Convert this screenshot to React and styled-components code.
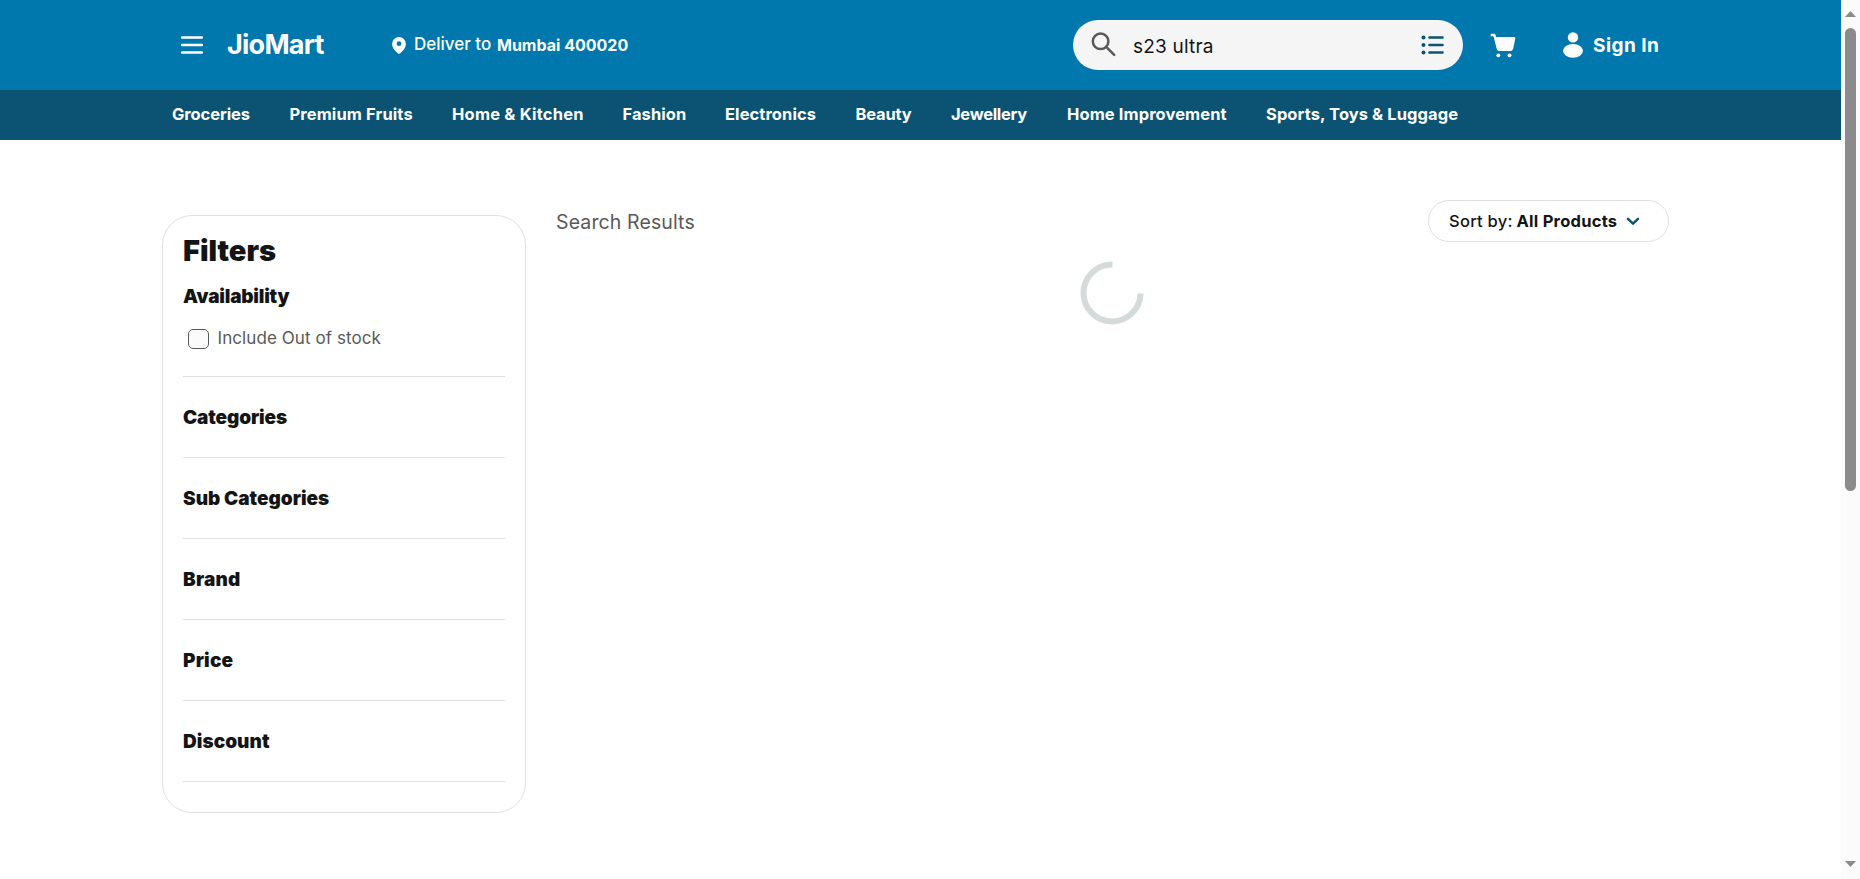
import React from "react";
import styled, { createGlobalStyle } from "styled-components";

const GlobalStyle = createGlobalStyle`
  *, *::before, *::after { box-sizing: border-box; }
  html, body { margin: 0; padding: 0; background: #fff; overflow: hidden; }
  body { font-family: Inter, "Liberation Sans", sans-serif; color: #141414; }
  svg { display: block; flex: none; }
`;

const Window = styled.div`
  display: flex;
  width: 100%;
  height: 879px;
`;

const Page = styled.div`
  flex: 1;
  min-width: 0;
`;

const TopBar = styled.header`
  display: flex;
  align-items: center;
  height: 90px;
  padding-left: 181px;
  background: #0078ad;
  color: #fff;
`;

const Logo = styled.div`
  width: 165px;
  margin-left: 24px;
  font-size: 27px;
  font-weight: 700;
  letter-spacing: -0.75px;
  line-height: 32px;
  padding-bottom: 1px;
`;

const Delivery = styled.div`
  display: flex;
  align-items: center;
  width: 681px;
  line-height: 20px;
  font-size: 16px;
  white-space: nowrap;
`;

const DeliverLabel = styled.span`
  width: 83px;
  margin-left: 8px;
  padding-bottom: 2px;
  font-size: 17px;
  font-weight: 500;
  letter-spacing: 0;
`;

const DeliverPlace = styled.span`
  font-weight: 700;
`;

const SearchBox = styled.div`
  display: flex;
  align-items: center;
  width: 390px;
  height: 50px;
  padding: 0 19px 0 18px;
  border-radius: 25px;
  background: #f5f5f5;
`;

const SearchText = styled.span`
  flex: 1;
  padding: 3px 0 0 16px;
  font-size: 19px;
  line-height: 24px;
  letter-spacing: 0.2px;
  color: #141414;
`;

const CartButton = styled.div`
  margin-left: 27px;
`;

const SignIn = styled.div`
  display: flex;
  align-items: center;
  gap: 10px;
  margin-left: 47px;
  font-size: 19px;
  line-height: 24px;
  font-weight: 700;
  letter-spacing: 0.45px;
`;

const SignInLabel = styled.span`
  padding-top: 2px;
`;

const CategoryBar = styled.nav`
  display: flex;
  align-items: center;
  gap: 40px;
  height: 50px;
  padding: 0 0 2px 172px;
  background: #0c5273;
  color: #fff;
`;

const CategoryLink = styled.a`
  flex: none;
  width: ${(p) => p.$width}px;
  font-size: 16.5px;
  line-height: 20px;
  font-weight: 700;
  letter-spacing: ${(p) => p.$spacing}px;
  white-space: nowrap;
`;

const Content = styled.main`
  display: flex;
  align-items: flex-start;
  gap: 30px;
  padding: 60px 172px 0 162px;
`;

const FilterCard = styled.aside`
  width: 364px;
  height: 598px;
  margin-top: 15px;
  padding: 18px 20px 0;
  border: 1px solid #e0e0e0;
  border-radius: 30px;
`;

const FilterTitle = styled.h2`
  margin: 0;
  font-size: 29px;
  line-height: 34px;
  font-weight: 900;
  letter-spacing: 0;
`;

const AvailabilitySection = styled.section`
  height: 109px;
  padding-top: 17px;
  border-bottom: 1px solid #e0e0e0;
`;

const FilterSection = styled.section`
  display: flex;
  align-items: center;
  height: 81px;
  padding-top: 1px;
  border-bottom: 1px solid #e0e0e0;
`;

const FilterHeading = styled.h3`
  margin: 0;
  font-size: 19px;
  line-height: 24px;
  font-weight: 900;
  letter-spacing: ${(p) => p.$spacing}px;
`;

const CheckRow = styled.div`
  display: flex;
  align-items: center;
  gap: 8.5px;
  margin-top: 19px;
  padding-left: 5px;
`;

const CheckBox = styled.span`
  width: 21px;
  height: 20px;
  border: 1px solid #595959;
  border-radius: 5px;
  background: #fbfbfb;
`;

const CheckLabel = styled.span`
  font-size: 17px;
  line-height: 20px;
  padding-bottom: 2px;
  letter-spacing: 0.08px;
  color: #595959;
`;

const Results = styled.section`
  flex: 1;
`;

const ResultsHeader = styled.div`
  display: flex;
  align-items: center;
  justify-content: space-between;
  height: 42px;
`;

const ResultsTitle = styled.div`
  padding-top: 1px;
  font-size: 19.5px;
  line-height: 24px;
  letter-spacing: 0.12px;
  color: #595959;
`;

const SortButton = styled.div`
  display: flex;
  align-items: center;
  width: 241px;
  height: 42px;
  padding-left: 20px;
  border: 1px solid #e0e0e0;
  border-radius: 21px;
  font-size: 16.5px;
  line-height: 20px;
  letter-spacing: 0.25px;
  white-space: nowrap;
`;

const SortLabel = styled.span`
  width: 67.5px;
  font-weight: 500;
`;

const SortValue = styled.span`
  width: 109.5px;
  font-weight: 700;
`;

const Loader = styled.div`
  display: flex;
  justify-content: center;
  padding: 19px 2px 0 0;
`;

const ScrollTrack = styled.div`
  display: flex;
  flex-direction: column;
  align-items: center;
  width: 19px;
  padding: 11px 0 12px;
  background: #fbfbfb;
`;

const ScrollThumb = styled.div`
  width: 11px;
  height: 463px;
  margin: 11px 0 auto;
  border-radius: 5.5px;
  background: #8b8b8b;
`;

const categories = [
  ["Groceries", 77.5, -0.08],
  ["Premium Fruits", 122.5, 0.12],
  ["Home & Kitchen", 130.5, 0.22],
  ["Fashion", 62.5, 0.05],
  ["Electronics", 90.5, 0.08],
  ["Beauty", 55.5, -0.17],
  ["Jewellery", 76, -0.3],
  ["Home Improvement", 159, 0.1],
  ["Sports, Toys & Luggage", 193, 0.08],
];

const filters = [
  ["Categories", -0.12],
  ["Sub Categories", 0],
  ["Brand", 0.25],
  ["Price", 0.2],
  ["Discount", 0.05],
];

const MenuIcon = () => (
  <svg width="22" height="20" viewBox="0 0 22 20" stroke="#fff" strokeWidth="2.5" strokeLinecap="round">
    <path d="M1.2 2.500h19.600M1.200 10h19.600M1.200 17.500h19.600" />
  </svg>
);

const PinIcon = () => (
  <svg width="14" height="17" viewBox="0 0 14 17" fill="#fff" fillRule="evenodd">
    <path d="M7 0a6.900 6.900 0 0 0-6.900 6.900c0 4 3.300 7.200 5.900 9.500a1.500 1.500 0 0 0 2 0c2.600-2.300 5.900-5.500 5.900-9.500A6.900 6.900 0 0 0 7 0Zm0 4.300a2.400 2.400 0 1 1 0 4.800 2.400 2.400 0 0 1 0-4.800Z" />
  </svg>
);

const SearchIcon = () => (
  <svg width="26" height="26" viewBox="0 0 26 26" fill="none" stroke="#595959" strokeWidth="2.500" strokeLinecap="round">
    <circle cx="9.600" cy="9.300" r="7.800" />
    <path d="m15.200 14.900 8 7.900" />
  </svg>
);

const ListIcon = () => (
  <svg width="23" height="20" viewBox="0 0 23 20" fill="#0c5273" stroke="#0c5273">
    <path d="M8.500 2.500h13M8.500 10h13M8.500 17.500h13" strokeWidth="2.600" strokeLinecap="round" />
    <g stroke="none">
      <circle cx="2.500" cy="2.500" r="2" />
      <circle cx="2.500" cy="10" r="2" />
      <circle cx="2.500" cy="17.500" r="2" />
    </g>
  </svg>
);

const CartIcon = () => (
  <svg width="26" height="25" viewBox="0 0 26 25" fill="#fff">
    <path d="M1.800.800h2.100c.8 0 1.500.5 1.700 1.300L6 3.900h18c.9 0 1.500.7 1.300 1.600l-2.100 9.900c-.4 1.600-1.600 2.700-3.200 2.700H9.800c-1.500 0-2.700-.9-3.100-2.400L3.700 3.900c-.1-.4-.4-.6-.8-.6H1.800a1.250 1.250 0 0 1 0-2.500Z" />
    <circle cx="8.300" cy="22.300" r="1.900" />
    <circle cx="19.500" cy="22.300" r="1.900" />
  </svg>
);

const PersonIcon = () => (
  <svg width="20" height="26" viewBox="0 0 20 26" fill="#fff">
    <circle cx="10" cy="5.400" r="5.200" />
    <ellipse cx="10" cy="18.800" rx="10" ry="6.900" />
  </svg>
);

const ChevronIcon = () => (
  <svg width="14" height="9" viewBox="0 0 14 9" fill="none" stroke="#0c5273" strokeWidth="2.500" strokeLinecap="round" strokeLinejoin="round">
    <path d="m2 1.900 5 4.700 5-4.700" />
  </svg>
);

const Spinner = () => (
  <svg width="64" height="64" viewBox="0 0 64 64" fill="none" stroke="#d5dbdb" strokeWidth="6">
    <path d="M32.500 3.500H32A28.500 28.500 0 1 0 60.500 32.500" />
  </svg>
);

const ScrollArrow = ({ down }) => (
  <svg width="11" height="6" viewBox="0 0 11 6" fill="#8b8b8b">
    <path d={down ? "M0 0h11L5.500 6Z" : "M0 6h11L5.500 0Z"} />
  </svg>
);

export default function App() {
  return (
    <Window>
      <GlobalStyle />
      <Page>
        <TopBar>
          <MenuIcon />
          <Logo>JioMart</Logo>
          <Delivery>
            <PinIcon />
            <DeliverLabel>Deliver to</DeliverLabel>
            <DeliverPlace>Mumbai 400020</DeliverPlace>
          </Delivery>
          <SearchBox>
            <SearchIcon />
            <SearchText>s23 ultra</SearchText>
            <ListIcon />
          </SearchBox>
          <CartButton><CartIcon /></CartButton>
          <SignIn>
            <PersonIcon />
            <SignInLabel>Sign In</SignInLabel>
          </SignIn>
        </TopBar>
        <CategoryBar>
          {categories.map(([name, width, spacing]) => (
            <CategoryLink key={name} $width={width} $spacing={spacing}>{name}</CategoryLink>
          ))}
        </CategoryBar>
        <Content>
          <FilterCard>
            <FilterTitle>Filters</FilterTitle>
            <AvailabilitySection>
              <FilterHeading $spacing={-0.2}>Availability</FilterHeading>
              <CheckRow>
                <CheckBox />
                <CheckLabel>Include Out of stock</CheckLabel>
              </CheckRow>
            </AvailabilitySection>
            {filters.map(([name, spacing]) => (
              <FilterSection key={name}>
                <FilterHeading $spacing={spacing}>{name}</FilterHeading>
              </FilterSection>
            ))}
          </FilterCard>
          <Results>
            <ResultsHeader>
              <ResultsTitle>Search Results</ResultsTitle>
              <SortButton>
                <SortLabel>Sort by:</SortLabel>
                <SortValue>All Products</SortValue>
                <ChevronIcon />
              </SortButton>
            </ResultsHeader>
            <Loader><Spinner /></Loader>
          </Results>
        </Content>
      </Page>
      <ScrollTrack>
        <ScrollArrow />
        <ScrollThumb />
        <ScrollArrow down />
      </ScrollTrack>
    </Window>
  );
}
